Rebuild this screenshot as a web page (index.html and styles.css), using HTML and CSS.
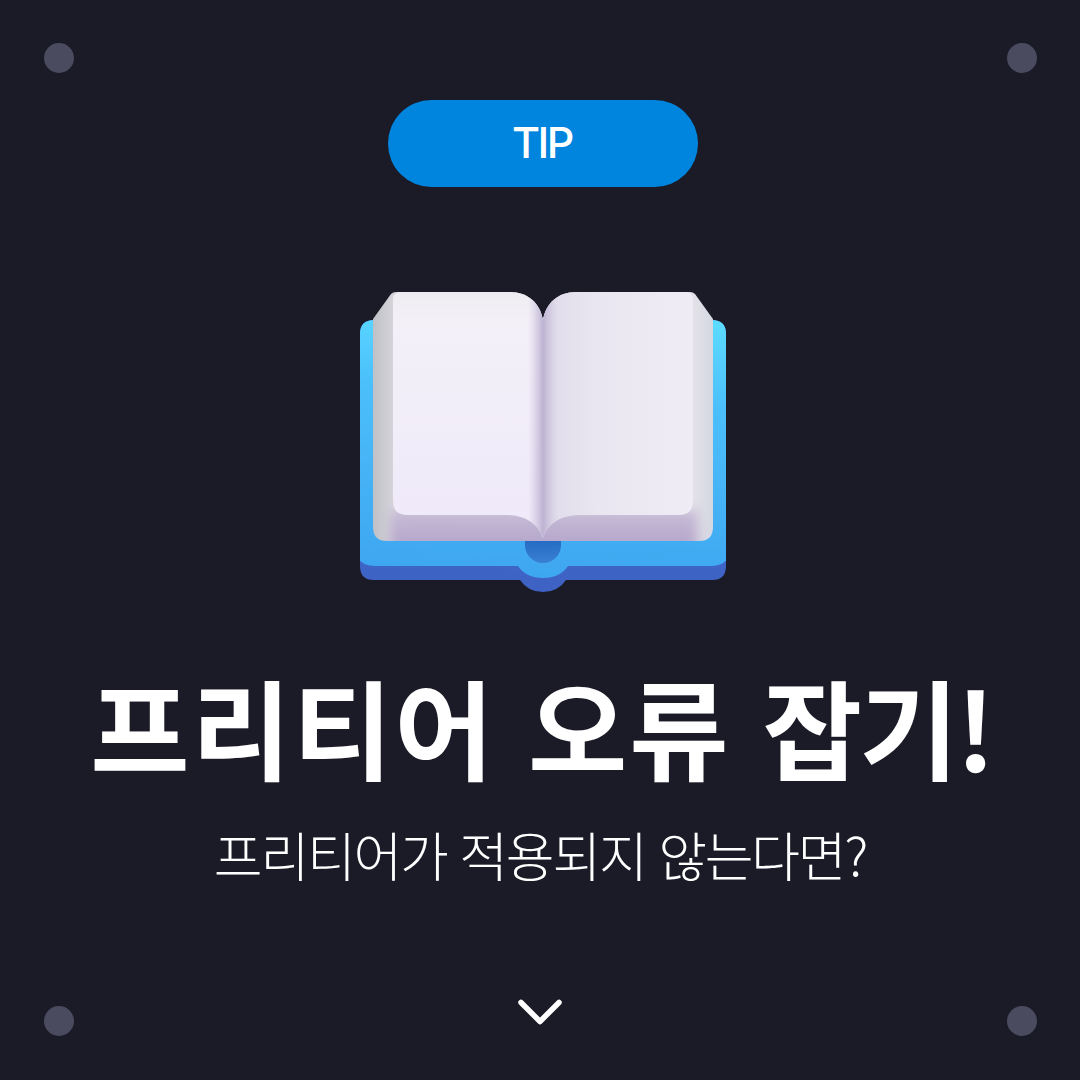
FILE: index.html
```html
<!DOCTYPE html>
<html lang="ko">

<head>
  <meta charset="UTF-8">
  <meta name="viewport" content="width=device-width, initial-scale=1.0">
  <title>프리티어 오류 잡기!</title>
  <link rel="stylesheet" href="styles.css">
</head>

<body>
  <div class="slide">
    <span class="dot dot-tl"></span>
    <span class="dot dot-tr"></span>
    <span class="dot dot-bl"></span>
    <span class="dot dot-br"></span>

    <div class="badge">TIP</div>

    <!-- viewBox uses page coordinates so the numbers can be read off the screenshot -->
    <svg class="book" viewBox="350 285 386 315" width="386" height="315" aria-hidden="true">
      <defs>
        <linearGradient id="coverTop" x1="0.6" y1="0" x2="0.5" y2="1">
          <stop offset="0" stop-color="#5cdaff" />
          <stop offset="0.3" stop-color="#4cc0fb" />
          <stop offset="1" stop-color="#3ea6f0" />
        </linearGradient>
        <linearGradient id="coverLow" x1="0" y1="0" x2="0" y2="1">
          <stop offset="0" stop-color="#3f75dc" />
          <stop offset="1" stop-color="#3e62c4" />
        </linearGradient>
        <linearGradient id="hole" x1="0" y1="0" x2="0" y2="1">
          <stop offset="0" stop-color="#1f66c2" />
          <stop offset="1" stop-color="#3a80d2" />
        </linearGradient>
        <linearGradient id="side" gradientUnits="userSpaceOnUse" x1="373" y1="0" x2="713" y2="0">
          <stop offset="0" stop-color="#bfc1c6" />
          <stop offset="0.06" stop-color="#d6d4da" />
          <stop offset="0.94" stop-color="#e4e2e8" />
          <stop offset="1" stop-color="#d4d7e2" />
        </linearGradient>
        <linearGradient id="edge" gradientUnits="userSpaceOnUse" x1="0" y1="512" x2="0" y2="541">
          <stop offset="0" stop-color="#c6bcd6" />
          <stop offset="1" stop-color="#b6a8cc" />
        </linearGradient>
        <linearGradient id="pageL" x1="0" y1="0" x2="0" y2="1">
          <stop offset="0" stop-color="#efecf1" />
          <stop offset="0.12" stop-color="#f3f0f8" />
          <stop offset="1" stop-color="#efe9fa" />
        </linearGradient>
        <linearGradient id="pageR" gradientUnits="userSpaceOnUse" x1="543" y1="0" x2="693" y2="0">
          <stop offset="0" stop-color="#dfdbe9" />
          <stop offset="0.35" stop-color="#e9e6f1" />
          <stop offset="1" stop-color="#efecf6" />
        </linearGradient>
        <linearGradient id="spine" gradientUnits="userSpaceOnUse" x1="528" y1="0" x2="558" y2="0">
          <stop offset="0" stop-color="#cfc6e0" stop-opacity="0" />
          <stop offset="0.5" stop-color="#bdb3d2" />
          <stop offset="1" stop-color="#cfc6e0" stop-opacity="0" />
        </linearGradient>
        <filter id="blur1" x="-5%" y="-5%" width="110%" height="110%">
          <feGaussianBlur stdDeviation="0.7" />
        </filter>
        <filter id="blur6" x="-20%" y="-100%" width="140%" height="300%">
          <feGaussianBlur stdDeviation="6" />
        </filter>
        <clipPath id="coverClip">
          <path d="M374 320H712Q726 320 726 334V566Q726 580 712 580H566Q558 592 543 592Q528 592 520 580H374Q360 580 360 566V334Q360 320 374 320Z" />
        </clipPath>
        <clipPath id="blockClip">
          <path d="M373 319L391 294Q393 292 396 292H690Q693 292 695 294L713 319V527Q713 541 699 541H387Q373 541 373 527Z" />
        </clipPath>
        <clipPath id="pagesClip">
          <path d="M393 300Q393 292 401 292H510C528 292 540 303 543 320C546 303 558 292 576 292H685Q693 292 693 300V501Q693 515 679 515H580C560 515 548 524 543 538C538 524 526 515 506 515H407Q393 515 393 501Z" />
        </clipPath>
      </defs>

      <!-- cover -->
      <g clip-path="url(#coverClip)">
        <rect x="355" y="315" width="376" height="280" fill="url(#coverLow)" />
        <path fill="url(#coverTop)" filter="url(#blur1)" d="M355 315H731V553Q726 566 712 566H568Q560 578 543 578Q526 578 518 566H374Q360 566 355 553Z" />
      </g>
      <path fill="url(#hole)" d="M525 535H561V545A18 18 0 0 1 525 545Z" />

      <!-- page block -->
      <g clip-path="url(#blockClip)">
        <rect x="373" y="292" width="340" height="249" fill="url(#side)" />
        <path fill="url(#edge)" filter="url(#blur6)" d="M390 510H698V560H390Z" />
      </g>
      <path fill="#1a1b27" d="M510 292C528 292 540 303 543 320C546 303 558 292 576 292V285H510Z" />
      <path fill="#6fc4ea" d="M542 320H544V324H542Z" />

      <!-- top pages -->
      <g clip-path="url(#pagesClip)">
        <rect x="393" y="292" width="150" height="250" fill="url(#pageL)" />
        <rect x="543" y="292" width="150" height="250" fill="url(#pageR)" />
        <rect x="528" y="292" width="30" height="250" fill="url(#spine)" />
      </g>
    </svg>

    <h1 class="title">프리티어 오류 <span class="title-tail">잡기!</span></h1>
    <p class="subtitle">프리티어가 적용되지 않는다면?</p>

    <svg class="chevron" viewBox="0 0 46 28" width="46" height="28" aria-hidden="true">
      <path d="M4 3.5L23 22.5L42 3.5" fill="none" stroke="#fff" stroke-width="5.5" stroke-linecap="round" stroke-linejoin="round" />
    </svg>
  </div>
</body>

</html>
```

FILE: styles.css
```css
html,
body {
  margin: 0;
  padding: 0;
}

.slide {
  position: relative;
  width: 1080px;
  height: 1080px;
  padding-top: 100px;
  box-sizing: border-box;
  overflow: hidden;
  display: flex;
  flex-direction: column;
  align-items: center;
  background: #1a1b27;
  color: #fff;
  font-family: "Noto Sans CJK KR", "Noto Sans", sans-serif;
}

.dot {
  position: absolute;
  width: 30px;
  height: 30px;
  border-radius: 50%;
  background: #4b4b60;
}

.dot-tl {
  left: 44px;
  top: 43px;
}

.dot-tr {
  left: 1007px;
  top: 43px;
}

.dot-bl {
  left: 44px;
  top: 1006px;
}

.dot-br {
  left: 1007px;
  top: 1006px;
}

.badge {
  width: 310px;
  height: 87px;
  margin-left: 6px;
  padding: 0 2px 4px 0;
  box-sizing: border-box;
  border-radius: 44px;
  background: #0085de;
  display: flex;
  align-items: center;
  justify-content: center;
  font-family: Inter, "Noto Sans", sans-serif;
  font-size: 43px;
  font-weight: 500;
  letter-spacing: -2.5px;
}

.book {
  display: block;
  margin-top: 98px;
  margin-left: 6px;
}

.title {
  margin: 50px 0 0 3px;
  font-size: 108px;
  line-height: 150px;
  font-weight: 700;
  letter-spacing: 2px;
  white-space: nowrap;
}

.title-tail {
  letter-spacing: -3px;
}

.subtitle {
  margin: 18px 0 0;
  font-size: 53px;
  line-height: 72px;
  font-weight: 300;
  letter-spacing: -2.2px;
  white-space: nowrap;
}

.chevron {
  display: block;
  margin-top: 109px;
}
```
